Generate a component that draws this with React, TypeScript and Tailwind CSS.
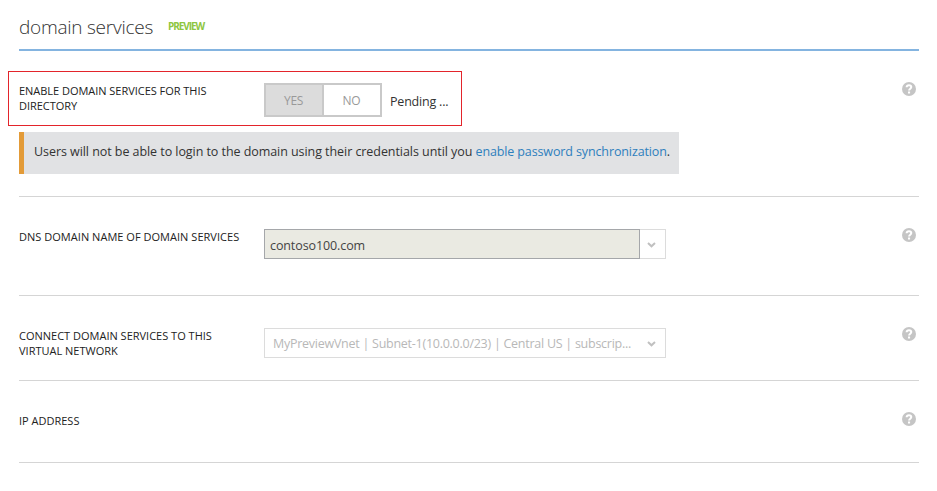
import type { ReactNode } from "react";

function HelpIcon() {
  return (
    <svg className="mr-[3px] ml-auto h-[14px] w-[14px] shrink-0" viewBox="0 0 14 14" aria-label="Help">
      <circle cx="7" cy="7" r="7" fill="#c5c5c5" />
      <path d="M4.6 5.2C4.7 3.7 5.7 3.2 7 3.2c1.4 0 2.3.7 2.3 1.9 0 1.6-2.2 1.6-2.2 3.4" fill="none" stroke="#fff" strokeWidth="2" />
      <rect x="6" y="9.5" width="2.1" height="2" fill="#fff" />
    </svg>
  );
}

function Chevron() {
  return (
    <svg className="h-[6px] w-[9px]" viewBox="0 0 9 6">
      <path d="M1 1l3.5 3.3L8 1" fill="none" stroke="#c0c0c0" strokeWidth="2" />
    </svg>
  );
}

function Label({ children }: { children: ReactNode }) {
  return <div className="w-[245px] shrink-0 text-[11px] leading-[15px] whitespace-nowrap text-[#222]">{children}</div>;
}

export default function App() {
  return (
    <main className="h-[491px] w-[937px] overflow-hidden bg-white font-['Open_Sans','Noto_Sans',sans-serif] text-[12.5px] text-[#333]">
      <header className="ml-[19px] flex h-[51px] w-[900px] border-b-2 border-[#84b4e0] whitespace-nowrap">
        <h1 className="mt-[13px] w-[149px] text-[19px] leading-[28px] font-light tracking-[-0.25px] text-[#333]">domain services</h1>
        <span className="mt-[20px] text-[10px] leading-[12px] font-bold tracking-[-1.05px] text-[#8ec63f]">PREVIEW</span>
      </header>

      <section className="ml-[19px] h-[146px] w-[900px] border-b border-[#d5d5d5] pt-5">
        <div className="-ml-[11px] flex">
          <div className="flex h-[55px] w-[454px] border border-[#e3242b] pl-[10px]">
            <div className="mt-[11px] tracking-[-0.03px]">
              <Label>ENABLE DOMAIN SERVICES FOR THIS<br />DIRECTORY</Label>
            </div>
            <div className="mt-[11px] flex h-[34px] w-[118px] border-2 border-[#c9c9c9] text-[12px] leading-[31px] tracking-[-0.3px] text-[#999]">
              <span className="w-[58px] border-r-2 border-[#c9c9c9] bg-[#dcdcdc] pr-px text-center">YES</span>
              <span className="w-[56px] pr-px text-center">NO</span>
            </div>
            <span className="mt-[20px] ml-[8px] leading-[20px] tracking-[-0.2px] whitespace-nowrap">Pending ...</span>
          </div>
          <div className="mt-[11px] flex flex-1"><HelpIcon /></div>
        </div>
        <div className="mt-[6px] h-[42px] w-[660px] border-l-[5px] border-[#e39b38] bg-[#e1e2e4] pl-[10px] leading-[39px] tracking-[-0.06px] whitespace-nowrap">
          Users will not be able to login to the domain using their credentials until you <a className="tracking-[-0.12px] text-[#2e7fbd]">enable password synchronization</a>.
        </div>
      </section>

      <section className="ml-[19px] flex h-[99px] w-[900px] border-b border-[#d5d5d5] pt-8">
        <div className="tracking-[0.03px]">
          <Label>DNS DOMAIN NAME OF DOMAIN SERVICES</Label>
        </div>
        <div className="flex h-[30px] w-[402px]">
          <div className="w-[376px] border border-[#a5a7aa] bg-[#eaeae2] pl-[5px] leading-[31px] tracking-[-0.1px] text-[#444]">contoso100.com</div>
          <div className="flex w-[26px] items-center border border-l-0 border-[#dcdcdc] pt-px pl-[7px]"><Chevron /></div>
        </div>
        <div className="-mt-px flex flex-1"><HelpIcon /></div>
      </section>

      <section className="ml-[19px] flex h-[85px] w-[900px] border-b border-[#d5d5d5] pt-8">
        <Label>CONNECT DOMAIN SERVICES TO THIS<br />VIRTUAL NETWORK</Label>
        <div className="flex h-[30px] w-[402px] items-center justify-between border border-[#dcdcdc] pt-px pr-[9px] pl-[8px] text-[#b8b8b8]">
          <span className="pt-[2px] tracking-[-0.26px] whitespace-nowrap">MyPreviewVnet | Subnet-1(10.0.0.0/23) | Central US | subscrip...</span>
          <Chevron />
        </div>
        <div className="-mt-px flex flex-1"><HelpIcon /></div>
      </section>

      <section className="ml-[19px] flex h-[82px] w-[900px] border-b border-[#d5d5d5] pt-8">
        <Label>IP ADDRESS</Label>
        <div className="-mt-px flex flex-1"><HelpIcon /></div>
      </section>
    </main>
  );
}
